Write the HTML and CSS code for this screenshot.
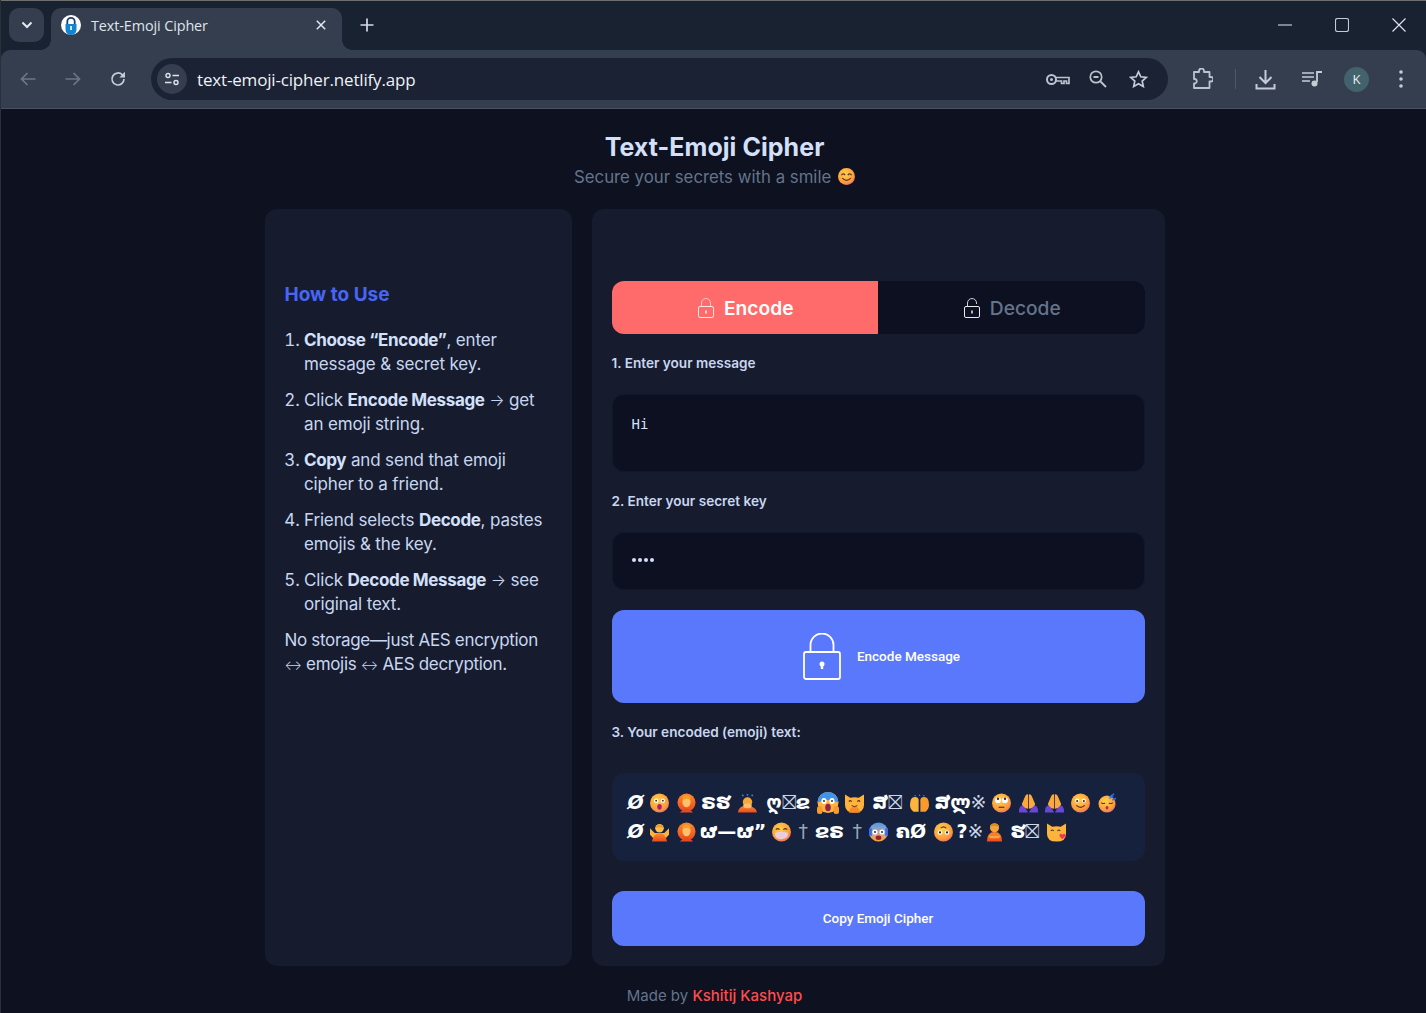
FILE: index.html
```html
<!DOCTYPE html>
<html lang="en">
<head>
<meta charset="utf-8">
<title>Text-Emoji Cipher</title>
<link rel="stylesheet" href="styles.css">
</head>
<body>
<svg class="defs" width="0" height="0" aria-hidden="true">
  <defs>
    <radialGradient id="fg" cx=".42" cy=".35" r=".75"><stop offset="0" stop-color="#ffd24a"/><stop offset=".65" stop-color="#fb9f3a"/><stop offset="1" stop-color="#ef5f78"/></radialGradient>
    <linearGradient id="og" x1="0" y1="0" x2="0" y2="1"><stop offset="0" stop-color="#ff8a2b"/><stop offset="1" stop-color="#e84a1f"/></linearGradient>
    <linearGradient id="bg" x1="0" y1="0" x2="0" y2="1"><stop offset="0" stop-color="#3f9bf0"/><stop offset=".55" stop-color="#c9a5a0"/><stop offset="1" stop-color="#fb9f3a"/></linearGradient>
    <symbol id="e-shock" viewBox="0 0 20 20"><circle cx="10" cy="10" r="10" fill="url(#fg)"/><circle cx="6.500" cy="7.500" r="2.300" fill="#fff"/><circle cx="13.500" cy="7.500" r="2.300" fill="#fff"/><circle cx="6.500" cy="7.500" r="1" fill="#4a2a20"/><circle cx="13.500" cy="7.500" r="1" fill="#4a2a20"/><ellipse cx="10" cy="14" rx="2.400" ry="3" fill="#b0206a"/></symbol>
    <symbol id="e-gesture" viewBox="0 0 20 20"><circle cx="10" cy="9.500" r="9.500" fill="url(#og)"/><ellipse cx="10" cy="9" rx="4.300" ry="5.500" fill="#ffc06a"/><path d="M5.500 4q4.500-4 9 0l-1.500 2.500q-3-1.500-6 0z" fill="#f5a028"/><path d="M3 20q7-8 14 0z" fill="#e84a1f"/></symbol>
    <symbol id="e-bow" viewBox="0 0 20 20"><circle cx="5" cy="2" r="1" fill="#3f86d8"/><circle cx="10" cy="1.400" r="1" fill="#3f86d8"/><circle cx="15" cy="2" r="1" fill="#3f86d8"/><circle cx="10" cy="9" r="5" fill="#f5a93a"/><path d="M0 20q1-8 10-7t10 7z" fill="url(#og)"/><ellipse cx="10" cy="13" rx="4.500" ry="2.500" fill="#ffc06a"/></symbol>
    <symbol id="e-scream" viewBox="0 0 22 22"><circle cx="11" cy="10.500" r="10.500" fill="#ffb33d"/><path d="M.5 10.500a10.500 10.500 0 0 1 21 0q-10.500-5-21 0z" fill="#3f95ee"/><ellipse cx="7" cy="9" rx="2.600" ry="3" fill="#fff"/><ellipse cx="15" cy="9" rx="2.600" ry="3" fill="#fff"/><circle cx="7" cy="9" r="1" fill="#333"/><circle cx="15" cy="9" r="1" fill="#333"/><ellipse cx="11" cy="15.500" rx="2.800" ry="3.800" fill="#92234a"/><rect x="0" y="14" width="5.500" height="8" rx="2.500" fill="#f99a2c"/><rect x="16.500" y="14" width="5.500" height="8" rx="2.500" fill="#f99a2c"/></symbol>
    <symbol id="e-cat" viewBox="0 0 20 20"><path d="M0 1l5.500 3.500q4.500-1 9 0L20 1v11q0 8-10 8T0 12z" fill="#fdb43c"/><path d="M4 20q6 .5 12 0-1-6-6-6t-6 6z" fill="#f68b2c"/><path d="M4 8.500q1.500-2 3 0M13 8.500q1.500-2 3 0" stroke="#5a3320" fill="none" stroke-width="1.100"/><path d="M7 12.500q3 2.500 6 0" stroke="#8a4020" stroke-width="1.200" fill="none"/></symbol>
    <symbol id="e-hands" viewBox="0 0 22 20"><circle cx="6" cy="1.500" r=".9" fill="#3f86d8"/><circle cx="11" cy="1" r=".9" fill="#3f86d8"/><circle cx="16" cy="1.500" r=".9" fill="#3f86d8"/><path d="M0 12q0-9 5.500-9t4.500 6v11H4q-4-3-4-8z" fill="#fdb43c"/><path d="M22 12q0-9-5.500-9T12 9v11h6q4-3 4-8z" fill="#f89a2c"/></symbol>
    <symbol id="e-roll" viewBox="0 0 20 20"><circle cx="10" cy="10" r="10" fill="url(#fg)"/><circle cx="6.300" cy="7" r="3.100" fill="#fff"/><circle cx="13.700" cy="7" r="3.100" fill="#fff"/><circle cx="6.300" cy="5.500" r="1.300" fill="#4a2a20"/><circle cx="13.700" cy="5.500" r="1.300" fill="#4a2a20"/><path d="M7 14.500h6" stroke="#6a3020" stroke-width="1.300"/></symbol>
    <symbol id="e-pray" viewBox="0 0 20 20"><path d="M9.600 1q-2-.5-3 1.500L3 11l1.500 4 5.100 1zM10.400 1q2-.5 3 1.500L17 11l-1.500 4-5.100 1z" fill="#fca83a"/><path d="M0 20v-2q0-4 3-5.500 4 1.500 6.500 7.500zM20 20v-2q0-4-3-5.500-4 1.500-6.500 7.500z" fill="#6a45d8"/></symbol>
    <symbol id="e-smile" viewBox="0 0 20 20"><circle cx="10" cy="10" r="10" fill="url(#fg)"/><circle cx="6.500" cy="7.500" r="2.200" fill="#fff"/><circle cx="13.500" cy="7.500" r="2.200" fill="#fff"/><circle cx="6.500" cy="8" r="1.100" fill="#4a2a20"/><circle cx="13.500" cy="8" r="1.100" fill="#4a2a20"/><path d="M5.500 12.500q4.500 4 9 0" stroke="#6a3020" stroke-width="1.300" fill="none"/></symbol>
    <symbol id="e-sleep" viewBox="0 0 20 20"><circle cx="9.500" cy="11" r="9" fill="url(#fg)"/><path d="M3.500 9.500q2 2 4 .3M11.500 9.800q2 1.700 4-.3" stroke="#5a3320" stroke-width="1.100" fill="none"/><ellipse cx="9.500" cy="15" rx="1.500" ry="1.800" fill="#a0305a"/><path d="M12 5l3-1.500-2-.5 4-2.500M15 7l4-2" stroke="#2f6ff0" stroke-width="1.500" fill="none"/></symbol>
    <symbol id="e-person" viewBox="0 0 20 20"><path d="M0 6l5 5h10l5-5v7l-4 4H4l-4-4z" fill="#fdb43c"/><path d="M2 20q2-9 8-9t8 9z" fill="url(#og)"/><circle cx="10" cy="6" r="4.500" fill="#fdc04f"/><path d="M5 6q5-8 10 0-5-2-10 0z" fill="#ee9b2a"/></symbol>
    <symbol id="e-mask" viewBox="0 0 20 20"><circle cx="10" cy="10" r="10" fill="url(#fg)"/><path d="M4 7.500q2-2 4 0M12 7.500q2-2 4 0" stroke="#5a3320" stroke-width="1.200" fill="none"/><path d="M3 11q7-2.500 14 0 0 6-7 6.500T3 11z" fill="#e9cddc"/></symbol>
    <symbol id="e-fear" viewBox="0 0 20 20"><circle cx="10" cy="10" r="10" fill="url(#bg)"/><circle cx="6.300" cy="10" r="2.700" fill="#fff"/><circle cx="13.700" cy="10" r="2.700" fill="#fff"/><circle cx="6.300" cy="10" r="1" fill="#222"/><circle cx="13.700" cy="10" r="1" fill="#222"/><ellipse cx="10" cy="16" rx="3" ry="2.300" fill="#922"/><path d="M0 6h3v8H0zM17 6h3v8h-3z" fill="#2f6ff0"/></symbol>
    <symbol id="e-flush" viewBox="0 0 20 20"><circle cx="10" cy="10" r="10" fill="url(#fg)"/><circle cx="6.300" cy="10.500" r="2.400" fill="#fff"/><circle cx="13.700" cy="10.500" r="2.400" fill="#fff"/><circle cx="6.300" cy="10.500" r="1.200" fill="#222"/><circle cx="13.700" cy="10.500" r="1.200" fill="#222"/><path d="M7 6q3-3 6 0" stroke="#6a3020" stroke-width="1.200" fill="none"/></symbol>
    <symbol id="e-man" viewBox="0 0 20 20"><circle cx="10" cy="5.500" r="4.800" fill="#f7a53a"/><path d="M5.500 3q4.500-4 9 0v1.500q-4.500-2-9 0z" fill="#d98a20"/><path d="M2 20q0-10 8-10t8 10z" fill="url(#og)"/><path d="M3.500 14h13l-2 2.500h-9z" fill="#f7a53a"/></symbol>
    <symbol id="e-kiss" viewBox="0 0 20 20"><path d="M0 1l5.500 3.500q4.500-1 9 0L20 1v11q0 8-10 8T0 12z" fill="#fdb43c"/><path d="M4 9q1.500-2 3 0M11 9q1.500-2 3 0" stroke="#5a3320" fill="none" stroke-width="1.100"/><path d="M16 13c1.500-2 4-1 3.500 1-.4 1.500-2 2.500-3.500 3.500-1-1-2.500-2-2.800-3.500-.3-2 1.800-3 2.800-1z" fill="#ee3a50"/></symbol>
    <symbol id="e-blush" viewBox="0 0 20 20"><circle cx="10" cy="10" r="10" fill="url(#fg)"/><path d="M4 8.500q2-3 4.500 0M11.500 8.500q2.500-3 4.500 0" stroke="#5a3320" stroke-width="1.400" fill="none"/><path d="M5 12q5 5 10 0" stroke="#5a3320" stroke-width="1.400" fill="none"/></symbol>
  </defs>
</svg>

<header class="browser">
  <div class="tabstrip">
    <button class="tab-search" type="button" aria-label="Search tabs">
      <svg width="12" height="8" viewBox="0 0 12 8"><path d="M1.500 1.500 6 6l4.500-4.500" fill="none" stroke="#e3e8f0" stroke-width="2"/></svg>
    </button>
    <div class="tab">
      <svg class="favicon" width="20" height="20" viewBox="0 0 20 20"><circle cx="10" cy="10" r="10" fill="#fff"/><path d="M6.300 9V6.500a3.700 3.700 0 0 1 7.400 0V9" fill="none" stroke="#1c3f6e" stroke-width="1.800"/><path d="M4.500 9h11v5.500a5.500 5.500 0 0 1-11 0z" fill="#1284d0"/><rect x="9.200" y="11" width="1.600" height="4" fill="#fff"/></svg>
      <span class="tab-title">Text-Emoji Cipher</span>
      <svg class="tab-close" width="10" height="10" viewBox="0 0 10 10"><path d="M.8.800l8.400 8.400M9.200.800.800 9.200" stroke="#e3e8f0" stroke-width="1.500"/></svg>
    </div>
    <svg class="new-tab" width="14" height="14" viewBox="0 0 14 14"><path d="M7 .5v13M.5 7h13" stroke="#d5dbe6" stroke-width="1.700"/></svg>
    <div class="win-controls">
      <svg width="14" height="14" viewBox="0 0 14 14"><path d="M0 7h14" stroke="#e3e8f0" stroke-width="1"/></svg>
      <svg width="14" height="14" viewBox="0 0 14 14"><rect x=".5" y=".5" width="13" height="13" rx="2" fill="none" stroke="#c5cbd6" stroke-width="1.100"/></svg>
      <svg width="14" height="14" viewBox="0 0 14 14"><path d="M.5.500l13 13M13.500.500l-13 13" stroke="#e3e8f0" stroke-width="1.100"/></svg>
    </div>
  </div>
  <div class="toolbar">
    <span class="tool"><svg width="16" height="14" viewBox="0 0 16 14"><path d="M15.500 7H1.500M7.500 1l-6 6 6 6" fill="none" stroke="#6d7685" stroke-width="1.700"/></svg></span>
    <span class="tool"><svg width="16" height="14" viewBox="0 0 16 14"><path d="M.5 7h14M8.500 1l6 6-6 6" fill="none" stroke="#6d7685" stroke-width="1.700"/></svg></span>
    <span class="tool"><svg width="16" height="16" viewBox="0 0 16 16"><path d="M14 8a6 6 0 1 1-1.800-4.300L14.500 6" fill="none" stroke="#c5ccd8" stroke-width="1.700"/><path d="M15 .800V6.500H9.300z" fill="#c5ccd8"/></svg></span>
    <div class="omnibox">
      <span class="site-btn"><svg width="16" height="14" viewBox="0 0 16 14"><circle cx="4" cy="3.500" r="2" fill="none" stroke="#dfe4ec" stroke-width="1.400"/><path d="M8.500 3.500H15M1 10.500h6.500" stroke="#dfe4ec" stroke-width="1.400"/><circle cx="12" cy="10.500" r="2" fill="none" stroke="#dfe4ec" stroke-width="1.400"/></svg></span>
      <span class="url">text-emoji-cipher.netlify.app</span>
      <span class="omni-icon"><svg width="24" height="13" viewBox="0 0 24 13"><circle cx="5.500" cy="6.500" r="4.500" fill="none" stroke="#bcc3cf" stroke-width="2"/><circle cx="5.500" cy="6.500" r="1.500" fill="#bcc3cf"/><path d="M10 4.500h13v6h-2.500V8H18v2.500h-2.500V8H10" fill="none" stroke="#bcc3cf" stroke-width="1.700"/></svg></span>
      <span class="omni-icon"><svg width="18" height="18" viewBox="0 0 18 18"><circle cx="7" cy="7" r="5.700" fill="none" stroke="#bcc3cf" stroke-width="1.700"/><path d="M4.500 7h5M11 11l6 6" stroke="#bcc3cf" stroke-width="1.800"/></svg></span>
      <span class="omni-icon"><svg width="19" height="18" viewBox="0 0 19 18"><path d="M9.500 1.800l2.300 5 5.400.6-4 3.700 1.100 5.400-4.800-2.700-4.800 2.700 1.100-5.400-4-3.700 5.400-.6z" fill="none" stroke="#c5ccd8" stroke-width="1.700"/></svg></span>
    </div>
    <span class="tool tool-ext"><svg width="22" height="22" viewBox="0 0 22 22"><path d="M8 4V3a2.500 2.500 0 0 1 5 0v1h5.500v5H20a2.200 2.200 0 0 1 0 4.500h-1.500V20H3v-4.500h1a2.300 2.300 0 0 0 0-4.500H3V4z" fill="none" stroke="#bcc3cf" stroke-width="1.800" stroke-linejoin="round"/></svg></span>
    <span class="divider"></span>
    <span class="tool tool-dl"><svg width="21" height="21" viewBox="0 0 21 21"><path d="M10.500 1v12M4.500 8l6 6 6-6" fill="none" stroke="#c5ccd8" stroke-width="2"/><path d="M1.500 15v4.500h18V15" fill="none" stroke="#c5ccd8" stroke-width="2"/></svg></span>
    <span class="tool tool-media"><svg width="20" height="16" viewBox="0 0 20 16"><path d="M0 2h12M0 6h12M0 10h8" stroke="#c5ccd8" stroke-width="1.700"/><path d="M15 11V1h5" fill="none" stroke="#c5ccd8" stroke-width="1.800"/><circle cx="12.500" cy="12.500" r="3" fill="#c5ccd8"/></svg></span>
    <span class="avatar">K</span>
    <span class="tool tool-menu"><svg width="4" height="18" viewBox="0 0 4 18"><circle cx="2" cy="2" r="1.800" fill="#c5ccd8"/><circle cx="2" cy="9" r="1.800" fill="#c5ccd8"/><circle cx="2" cy="16" r="1.800" fill="#c5ccd8"/></svg></span>
  </div>
</header>

<main class="page">
  <div class="masthead">
    <h1>Text-Emoji Cipher</h1>
    <p class="tagline">Secure your secrets with a smile <svg class="em-tag"><use href="#e-blush"/></svg></p>
  </div>
  <div class="columns">
    <aside class="panel help">
      <h3>How to Use</h3>
      <ol>
        <li><strong>Choose “Encode”</strong>, enter message &amp; secret key.</li>
        <li>Click <strong>Encode Message</strong> <span class="arrow">→</span> get an emoji string.</li>
        <li><strong>Copy</strong> and send that emoji cipher to a friend.</li>
        <li>Friend selects <strong>Decode</strong>, pastes emojis &amp; the key.</li>
        <li>Click <strong>Decode Message</strong> <span class="arrow">→</span> see original text.</li>
      </ol>
      <p>No storage—just AES encryption <span class="arrow arrow-both">↔</span> emojis <span class="arrow arrow-both">↔</span> AES decryption.</p>
    </aside>
    <section class="panel work">
      <div class="tabs">
        <div class="mode mode-on">
          <svg width="16" height="20" viewBox="0 0 16 20"><path d="M3.500 8.500V5a4.500 4.500 0 0 1 9 0v3.500" fill="none" stroke="#ffc5c5" stroke-width="1"/><rect x=".5" y="8.500" width="15" height="11" rx="1.500" fill="none" stroke="#ffe5e5" stroke-width="1"/><rect x="7.300" y="12.500" width="1.400" height="3" fill="#fff"/></svg>
          <span>Encode</span>
        </div>
        <div class="mode">
          <svg width="16" height="20" viewBox="0 0 16 20"><path d="M3.500 8.500V5a4.500 4.500 0 0 1 9 0v1" fill="none" stroke="#c9ced8" stroke-width="1"/><rect x=".5" y="8.500" width="15" height="11" rx="1.500" fill="none" stroke="#e8ebf0" stroke-width="1"/><rect x="7.300" y="12.500" width="1.400" height="3" fill="#fff"/></svg>
          <span>Decode</span>
        </div>
      </div>
      <label class="field-label label-one">1. Enter your message</label>
      <div class="area">Hi</div>
      <label class="field-label label-two">2. Enter your secret key</label>
      <div class="secret"><i></i><i></i><i></i><i></i></div>
      <button class="action action-main" type="button">
        <svg width="38" height="47" viewBox="0 0 38 47"><path d="M7.500 19V12a11.500 11.500 0 0 1 23 0v7" fill="none" stroke="#fff" stroke-width="1.800"/><rect x="1" y="19" width="36" height="27" rx="2" fill="none" stroke="#fff" stroke-width="1.800"/><circle cx="19" cy="31" r="2.500" fill="#fff"/><rect x="17.800" y="31" width="2.400" height="5" fill="#fff"/></svg>
        <span>Encode Message</span>
      </button>
      <label class="field-label label-three">3. Your encoded (emoji) text:</label>
      <div class="cipher">
        <div class="cipher-line">
          <span class="g w18 g-a">Ø</span><svg class="em ml5"><use href="#e-shock"/></svg><svg class="em ml8"><use href="#e-gesture"/></svg><span class="g w35 ml3">ຣຮ</span><svg class="em ml4"><use href="#e-bow"/></svg><span class="g w51 ml6">ღ<b class="box">⛝</b>ຂ</span><svg class="em-l ml3"><use href="#e-scream"/></svg><svg class="em ml6"><use href="#e-cat"/></svg><span class="g w39 ml4">ສ<b class="box">⛝</b></span><svg class="em ml3"><use href="#e-hands"/></svg><span class="g w56 ml4">ສლ<b class="box">※</b></span><svg class="em ml3"><use href="#e-roll"/></svg><svg class="em ml8"><use href="#e-pray"/></svg><svg class="em ml7"><use href="#e-pray"/></svg><svg class="em ml7"><use href="#e-smile"/></svg><svg class="em ml8"><use href="#e-sleep"/></svg>
        </div>
        <div class="cipher-line">
          <span class="g w18 g-a">Ø</span><svg class="em ml5"><use href="#e-person"/></svg><svg class="em ml8"><use href="#e-gesture"/></svg><span class="g w69 ml3">ຜ—ຜ”</span><svg class="em ml4"><use href="#e-mask"/></svg><span class="g w8 g-pin ml8">†</span><span class="g w32 ml7">ຂຣ</span><span class="g w8 g-pin ml7">†</span><svg class="em ml8"><use href="#e-fear"/></svg><span class="g w35 ml6">ຄØ</span><svg class="em ml5"><use href="#e-flush"/></svg><span class="g w23 ml4">?<b class="box">※</b></span><svg class="em ml5"><use href="#e-man"/></svg><span class="g w35 ml4">ຮ<b class="box">⛝</b></span><svg class="em ml4"><use href="#e-kiss"/></svg>
        </div>
      </div>
      <button class="action action-copy" type="button"><span>Copy Emoji Cipher</span></button>
    </section>
  </div>
  <footer class="credit">Made by <a href="#">Kshitij Kashyap</a></footer>
</main>
</body>
</html>
```
FILE: styles.css
```css
* { box-sizing: border-box; }
html, body { margin: 0; height: 100%; }
body {
  height: 1013px;
  overflow: hidden;
  background: #0d1120;
  font-family: Inter, "Liberation Sans", sans-serif;
  border-left: 1px solid #2a2f3a;
}
.defs { position: absolute; }
.browser { background: #192231; }
.tabstrip {
  height: 50px;
  display: flex;
  align-items: flex-start;
  border-top: 1px solid #6e6e6e;
  padding: 7px 0 0 8px;
}
.tab-search {
  width: 35px; height: 34px;
  border: 0; border-radius: 10px;
  background: #353e4f;
  display: flex; align-items: center; justify-content: center;
  padding: 0;
}
.tab {
  position: relative;
  width: 291px; height: 42px;
  margin-left: 7px;
  background: #353e4f;
  border-radius: 10px 10px 0 0;
  display: flex; align-items: center;
  padding: 0 16px 8px 10px;
  font: 14.4px "Open Sans", "Noto Sans", sans-serif;
  color: #dfe4ec;
}
.tab::before, .tab::after {
  content: "";
  position: absolute;
  bottom: 0;
  width: 10px; height: 10px;
}
.tab::before { left: -10px; background: radial-gradient(circle at 0 0, transparent 9.500px, #353e4f 10px); }
.tab::after { right: -10px; background: radial-gradient(circle at 100% 0, transparent 9.500px, #353e4f 10px); }
.favicon { flex: none; }
.tab-title { margin-left: 10px; flex: 1; letter-spacing: -.1px; }
.new-tab { margin: 10px 0 0 18px; }
.win-controls {
  margin-left: auto;
  display: flex; gap: 43px;
  padding: 10px 20px 0 0;
}
.toolbar {
  height: 59px;
  background: #353e4f;
  border-radius: 9px 9px 0 0;
  border-bottom: 1px solid #4a5160;
  display: flex; align-items: center;
  padding: 0 0 0 4px;
}
.tool { width: 45px; height: 40px; display: flex; align-items: center; justify-content: center; flex: none; }
.omnibox {
  width: 1017px; height: 42px;
  margin-left: 11px;
  background: #1a2233;
  border-radius: 21px;
  display: flex; align-items: center;
  padding: 0 10px 0 6px;
  flex: none;
}
.site-btn {
  width: 30px; height: 30px; border-radius: 50%;
  background: #353e4f;
  display: flex; align-items: center; justify-content: center;
  flex: none;
}
.url { margin-left: 10px; flex: 1; color: #eef1f6; font: 17px "Open Sans", sans-serif; letter-spacing: -.17px; }
.omni-icon { width: 40px; height: 30px; display: flex; align-items: center; justify-content: center; flex: none; }
.tool-ext { margin-left: 12px; width: 44px; }
.divider { width: 1px; height: 20px; background: #4f5868; margin-left: 11px; flex: none; }
.tool-dl { margin-left: 7px; }
.tool-media { margin-left: 1px; }
.avatar {
  width: 25px; height: 25px; border-radius: 50%;
  background: #43626c; color: #e8edf2;
  font: 13px "Open Sans", sans-serif;
  display: flex; align-items: center; justify-content: center;
  flex: none; margin-left: 10px;
}
.tool-menu { margin-left: 9px; }

.page { display: flex; flex-direction: column; align-items: center; padding-left: 2px; }
.masthead { text-align: center; height: 100px; padding-top: 23px; }
h1 { margin: 0; font-size: 25px; font-weight: 700; line-height: 30px; color: #d4e0fa; letter-spacing: .05px; }
.tagline { margin: 3px 0 0; font-size: 16.8px; line-height: 24px; color: #64748b; }
.em-tag { width: 17px; height: 17px; margin-left: 2px; vertical-align: -2px; }
.columns { display: grid; grid-template-columns: 307px 573px; gap: 20px; height: 757px; }
.panel { background: #161c2e; border-radius: 12px; padding: 72px 20px 20px; }
.help { color: #c9d6f0; font-size: 17px; line-height: 24px; letter-spacing: -.15px; padding-right: 20px; }
.help h3 { margin: 0 0 21px; padding-top: 2px; font-size: 19px; line-height: 24px; font-weight: 700; letter-spacing: 0; color: #4766f5; }
.help ol { margin: 0; padding: 0 0 0 19.500px; }
.help li { margin-bottom: 12px; }
.help strong { font-weight: 700; color: #d4e0fa; letter-spacing: -.35px; }
.help p { margin: 0; letter-spacing: -.32px; }
.arrow { font-weight: 300; font-size: 16px; line-height: 0; }
.arrow-both { font-size: 13px; }
.tabs { display: flex; height: 53px; border-radius: 12px; background: #0d1020; overflow: hidden; }
.mode {
  flex: 1;
  display: flex; align-items: center; justify-content: center; gap: 10px;
  padding-left: 2px;
  font-size: 19.2px; font-weight: 500; color: #64748b;
}
.mode-on { background: #ff6b6b; color: #fff; font-weight: 600; }
.field-label { display: block; font-size: 13.6px; font-weight: 600; line-height: 20px; color: #c9d6f0; }
.label-one { margin: 19px 0 21px; }
.label-two { margin: 19px 0 21px; }
.label-three { margin: 19px 0 31px; }
.area {
  height: 78px;
  background: #0d1020;
  border: 1px solid #12172a;
  border-radius: 12px;
  padding: 21px 19px;
  font: 14px/16px "DejaVu Sans Mono", monospace;
  color: #d4e0fa;
}
.secret {
  height: 58px;
  background: #0d1020;
  border: 1px solid #12172a;
  border-radius: 12px;
  padding: 0 19px 2px;
  display: flex; align-items: center; gap: 2px;
}
.secret i { width: 4px; height: 4px; border-radius: 50%; background: #d4e0fa; }
.action {
  display: flex; align-items: center; justify-content: center;
  width: 100%;
  background: #5a78fb;
  border: 0; border-radius: 12px;
  color: #fff;
  font: 500 13.5px Roboto, sans-serif;
  padding: 0;
}
.action span { padding-bottom: 2px; }
.action-main { height: 93px; margin-top: 20px; gap: 16px; padding-left: 7px; }
.action-copy { height: 55px; margin-top: 30px; }
.cipher {
  height: 88px;
  background: #15213d;
  border-radius: 12px;
  padding: 15px 15px 0;
  color: #fff;
}
.cipher-line { height: 29px; display: flex; align-items: center; white-space: nowrap; }
.g { font: 700 19px/29px "DejaVu Sans", sans-serif; flex: none; text-align: center; height: 29px; }
.g-a { font-style: italic; }
.g-pin { color: #9aa6b8; font-weight: 400; }
.box { font-weight: 400; font-size: 19px; color: #cdd6e6; }
.em { width: 19px; height: 20px; flex: none; }
.em-l { width: 22px; height: 22px; flex: none; }
.w8 { width: 8px; } .w18 { width: 18px; } .w23 { width: 23px; } .w32 { width: 32px; }
.w35 { width: 35px; } .w39 { width: 39px; } .w51 { width: 51px; } .w56 { width: 56px; } .w69 { width: 69px; }
.ml3 { margin-left: 3px; } .ml4 { margin-left: 4px; } .ml5 { margin-left: 5px; } .ml6 { margin-left: 6px; }
.ml7 { margin-left: 7px; } .ml8 { margin-left: 8px; }
.credit { margin-top: 20px; font-size: 15px; line-height: 20px; color: #64748b; }
.credit a { color: #ff4d4d; font-weight: 500; text-decoration: none; }
```
